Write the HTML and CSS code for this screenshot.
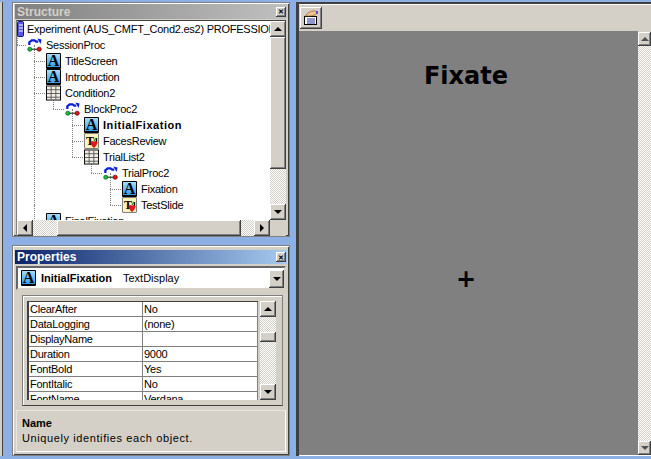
FILE: index.html
```html
<!DOCTYPE html>
<html lang="en">
<head>
    <meta charset="UTF-8">
    <title>E-Studio</title>
    <link rel="stylesheet" href="styles.css">
</head>
<body>

<svg class="defs" width="0" height="0">
    <symbol id="i-proc" viewBox="0 0 16 16">
        <path d="M2.500 8V5L5 3h3l2 1.500h2" fill="none" stroke="#0a1fd8" stroke-width="2.400"/>
        <path d="M11 1l4.500 1-1 5z" fill="#0a1fd8"/>
        <path d="M3 12.500h10" stroke="#000"/>
        <circle cx="3" cy="12.500" r="2.200" fill="#1ebc2c" stroke="#063" stroke-width="0.800"/>
        <circle cx="13" cy="12.500" r="2.200" fill="#e01818" stroke="#600" stroke-width="0.800"/>
    </symbol>
    <symbol id="i-list" viewBox="0 0 16 16">
        <rect x="0.500" y="0.500" width="15" height="15" fill="#f4f0e8" stroke="#000"/>
        <path d="M5.500 1v14M10.500 1v14M1 4.500h14M1 8.500h14M1 12.500h14" stroke="#555" fill="none"/>
    </symbol>
    <symbol id="i-fruit" viewBox="0 0 15 16">
        <path d="M10.500 4v5M13 4v5" stroke="#000" stroke-width="1.300"/>
        <path d="M4.500 8c2-1.500 3-1 3.500 0 .6-1 2-1.500 3.500 0 0 2.500-2 5-3.500 6-1.500-1-3.500-3.500-3.500-6z" fill="#e01818"/>
        <path d="M8 7l2-3" stroke="#1a8a20" stroke-width="1.300"/>
    </symbol>
</svg>

<div class="sliver"></div>

<div class="left">
    <section class="panel structure">
        <div class="title inactive">
            <span>Structure</span>
            <button class="close">&#10005;</button>
        </div>
        <div class="tree-box">
            <div class="tree-row">
                <div class="tree-view">
                    <div class="node root-node">
                        <svg class="book" width="8" height="16" viewBox="0 0 8 16">
                            <rect x="0.500" y="0.500" width="6" height="15" rx="1" fill="#5a5ae0" stroke="#101080"/>
                            <path d="M2 4h4M2 7h4M2 10h4" stroke="#fff"/>
                        </svg>
                        <span class="root-label">Experiment (AUS_CMFT_Cond2.es2) PROFESSIONAL</span>
                    </div>
                    <ul class="tree top">
                        <li>
                            <div class="node"><svg class="ico"><use href="#i-proc"/></svg>SessionProc</div>
                            <ul class="tree">
                                <li><div class="node"><span class="ico ico-text">A</span>TitleScreen</div></li>
                                <li><div class="node"><span class="ico ico-text">A</span>Introduction</div></li>
                                <li>
                                    <div class="node"><svg class="ico"><use href="#i-list"/></svg>Condition2</div>
                                    <ul class="tree">
                                        <li>
                                            <div class="node"><svg class="ico"><use href="#i-proc"/></svg>BlockProc2</div>
                                            <ul class="tree">
                                                <li><div class="node selected"><span class="ico ico-text">A</span>InitialFixation</div></li>
                                                <li><div class="node"><span class="ico ico-slide">T<svg class="fruit"><use href="#i-fruit"/></svg></span>FacesReview</div></li>
                                                <li>
                                                    <div class="node"><svg class="ico"><use href="#i-list"/></svg>TrialList2</div>
                                                    <ul class="tree">
                                                        <li>
                                                            <div class="node"><svg class="ico"><use href="#i-proc"/></svg>TrialProc2</div>
                                                            <ul class="tree">
                                                                <li><div class="node"><span class="ico ico-text">A</span>Fixation</div></li>
                                                                <li><div class="node"><span class="ico ico-slide">T<svg class="fruit"><use href="#i-fruit"/></svg></span>TestSlide</div></li>
                                                            </ul>
                                                        </li>
                                                    </ul>
                                                </li>
                                            </ul>
                                        </li>
                                    </ul>
                                </li>
                                <li><div class="node"><span class="ico ico-text">A</span>FinalFixation</div></li>
                            </ul>
                        </li>
                    </ul>
                </div>
                <div class="vbar">
                    <button class="arrow"><i class="tri up"></i></button>
                    <div class="thumb tree-thumb"></div>
                    <div class="track"></div>
                    <button class="arrow"><i class="tri down"></i></button>
                </div>
            </div>
            <div class="hbar">
                <button class="arrow"><i class="tri left-tri"></i></button>
                <div class="track h-lead"></div>
                <div class="thumb h-thumb"></div>
                <div class="track"></div>
                <button class="arrow"><i class="tri right-tri"></i></button>
                <div class="corner"></div>
            </div>
        </div>
    </section>

    <section class="panel properties">
        <div class="title active">
            <span>Properties</span>
            <button class="close">&#10005;</button>
        </div>
        <div class="combo">
            <span class="ico ico-text">A</span>
            <b class="combo-name">InitialFixation</b>
            <span>TextDisplay</span>
            <button class="arrow combo-btn"><i class="tri down"></i></button>
        </div>
        <div class="grid-box">
            <div class="grid-clip">
                <table class="grid">
                    <tr><td>ClearAfter</td><td>No</td></tr>
                    <tr><td>DataLogging</td><td>(none)</td></tr>
                    <tr><td>DisplayName</td><td></td></tr>
                    <tr><td>Duration</td><td>9000</td></tr>
                    <tr><td>FontBold</td><td>Yes</td></tr>
                    <tr><td>FontItalic</td><td>No</td></tr>
                    <tr><td>FontName</td><td>Verdana</td></tr>
                </table>
            </div>
            <div class="vbar grid-bar">
                <button class="arrow"><i class="tri up"></i></button>
                <div class="track grid-lead"></div>
                <div class="thumb grid-thumb"></div>
                <div class="track"></div>
                <button class="arrow"><i class="tri down"></i></button>
            </div>
        </div>
        <div class="desc">
            <b>Name</b>
            <span class="desc-text">Uniquely identifies each object.</span>
        </div>
    </section>
</div>

<main class="editor">
    <div class="toolbar">
        <button class="tool">
            <svg width="16" height="16" viewBox="0 0 16 16">
                <rect x="1.500" y="6.500" width="12" height="8" fill="#fff" stroke="#000"/>
                <path d="M4 9h8M4 11h8M4 13h8" stroke="#2030a0"/>
                <path d="M2 6l3-3 4-2 4 0 1 2-2 2-4 1z" fill="#f0c48c" stroke="#805020" stroke-width="0.600"/>
                <path d="M14 1v3" stroke="#3030e0" stroke-width="1.400"/>
            </svg>
        </button>
    </div>
    <div class="stage-row">
        <div class="stage">
            <div class="fixate">Fixate</div>
            <div class="plus">+</div>
        </div>
        <div class="vbar stage-bar">
            <button class="arrow"><i class="tri up"></i></button>
            <div class="track"></div>
            <button class="arrow"><i class="tri down"></i></button>
        </div>
    </div>
</main>

</body>
</html>
```

FILE: styles.css
```css
* {
    box-sizing: border-box;
}
html, body {
    height: 100%;
}
body {
    display: flex;
    margin: 0;
    padding: 2px 0 3px;
    overflow: hidden;
    background-color: #8cb0e4;
    font-family: 'Liberation Sans', sans-serif;
    font-size: 11px;
    color: #000;
}
.defs {
    position: absolute;
}
button {
    padding: 0;
    border: none;
    font: inherit;
}

/* win2k bevels */
.arrow, .thumb, .close, .tool {
    background-color: #d4d0c8;
    box-shadow: inset -1px -1px #404040, inset 1px 1px #fff, inset -2px -2px #808080;
}
.track {
    flex: 1;
    background-color: #fff;
    background-image: conic-gradient(#d4d0c8 25%, #fff 0 50%, #d4d0c8 0 75%, #fff 0);
    background-size: 2px 2px;
}
.tri {
    display: block;
    width: 0;
    height: 0;
    border: 4px solid transparent;
}
.tri.up {
    border-top: 0;
    border-bottom-color: #000;
}
.tri.down {
    border-bottom: 0;
    border-top-color: #000;
}
.tri.left-tri {
    border-left: 0;
    border-right-color: #000;
}
.tri.right-tri {
    border-right: 0;
    border-left-color: #000;
}

.sliver {
    width: 3px;
    background-color: #d4d0c8;
    border-right: 1px solid #404040;
}
.left {
    display: flex;
    flex-direction: column;
    gap: 8px;
    width: 278px;
    margin-left: 9px;
}
.panel {
    display: flex;
    flex-direction: column;
    padding: 1px 2px 2px;
    background-color: #d4d0c8;
    border: 1px solid #808080;
    box-shadow: inset 1px 1px #fff, inset -1px -1px #404040;
}
.structure {
    height: 235px;
}
.properties {
    flex: 1;
    padding-top: 4px;
}
.title {
    display: flex;
    align-items: center;
    justify-content: space-between;
    flex-shrink: 0;
    height: 15px;
    padding: 0 1px 0 2px;
    font-weight: bold;
    font-size: 12px;
    color: #fff;
}
.title.inactive {
    background: linear-gradient(to right, #808080, #c0c0c0);
    color: #d4d0c8;
}
.title.active {
    height: 14px;
    background: linear-gradient(to right, #0a246a, #a6caf0);
}
.close {
    display: flex;
    align-items: center;
    justify-content: center;
    width: 10px;
    height: 10px;
    font-size: 7px;
    line-height: 1;
    color: #000;
}

.tree-box {
    display: flex;
    flex-direction: column;
    height: 216px;
    margin: 1px 1px 0;
    border-top: 1px solid #404040;
    border-left: 1px solid #808080;
    background-color: #fff;
}
.tree-row {
    display: flex;
    height: 199px;
}
.tree-view {
    flex: 1;
    min-width: 0;
    overflow: hidden;
    white-space: nowrap;
    letter-spacing: -0.25px;
}
.node {
    display: flex;
    align-items: center;
    position: relative;
    z-index: 1;
    height: 16px;
    gap: 4px;
}
.root-node {
    gap: 2px;
}
.book {
    flex-shrink: 0;
}
.root-label {
    flex-shrink: 0;
}
.selected {
    font-weight: bold;
    letter-spacing: 0.55px;
}
.ico {
    flex-shrink: 0;
    width: 15px;
    height: 16px;
}
.ico-text {
    display: block;
    border: 1px solid #000;
    border-bottom-width: 2px;
    border-radius: 1px;
    background: linear-gradient(to bottom, #a6dcfa, #2f9fee);
    font-family: 'Liberation Serif', serif;
    font-weight: bold;
    font-size: 16px;
    line-height: 14px;
    letter-spacing: 0;
    text-align: center;
}
.ico-slide {
    display: flex;
    overflow: hidden;
    padding-left: 1px;
    border: 1px solid #808080;
    border-radius: 1px;
    background-color: #fdf3b8;
    font-family: 'Liberation Serif', serif;
    font-weight: bold;
    font-size: 12px;
    line-height: 15px;
    letter-spacing: 0;
}
.fruit {
    flex-shrink: 0;
    width: 15px;
    height: 16px;
    margin-left: -8px;
}
.tree {
    margin: 0;
    padding: 0;
    list-style: none;
}
.tree li {
    position: relative;
    padding-left: 19px;
}
.tree li::before {
    content: "";
    position: absolute;
    top: -8px;
    bottom: 0;
    left: 7px;
    border-left: 1px dotted #808080;
}
.tree li::after {
    content: "";
    position: absolute;
    top: 8px;
    left: 7px;
    width: 11px;
    border-top: 1px dotted #808080;
}
.tree li:last-child::before {
    bottom: auto;
    height: 16px;
}
.tree.top > li {
    padding-left: 10px;
}
.tree.top > li::before {
    left: 0;
}
.tree.top > li::after {
    left: 0;
    width: 9px;
}

.vbar {
    display: flex;
    flex-direction: column;
    flex-shrink: 0;
    width: 16px;
}
.vbar .arrow, .hbar .arrow {
    display: flex;
    align-items: center;
    justify-content: center;
    flex-shrink: 0;
    width: 16px;
    height: 16px;
}
.tree-thumb {
    height: 132px;
    flex-shrink: 0;
}
.hbar {
    display: flex;
    height: 16px;
}
.h-lead {
    flex: none;
    width: 24px;
}
.h-thumb {
    width: 184px;
}
.corner {
    flex-shrink: 0;
    width: 16px;
    background-color: #d4d0c8;
}

.combo {
    display: flex;
    align-items: center;
    flex-shrink: 0;
    height: 24px;
    margin: 2px 1px 0;
    padding-left: 3px;
    gap: 5px;
    background-color: #fff;
    border: 2px solid #666;
    border-right-color: #d4d0c8;
    border-bottom-color: #d4d0c8;
}
.combo-name {
    width: 77px;
}
.combo-btn {
    display: flex;
    align-items: center;
    justify-content: center;
    align-self: flex-end;
    width: 15px;
    height: 18px;
    margin-left: auto;
}
.grid-box {
    display: flex;
    flex-shrink: 0;
    height: 111px;
    margin: 5px 4px 0 7px;
    padding: 5px 6px 5px 4px;
    gap: 2px;
    border: 1px solid #808080;
    border-bottom-color: #404040;
    box-shadow: inset 1px 1px #fff;
}
.grid-clip {
    flex: 1;
    overflow: hidden;
    background-color: #fff;
    border-top: 1px solid #404040;
    border-left: 2px solid #404040;
}
.grid {
    width: 100%;
    table-layout: fixed;
    border-collapse: separate;
    border-spacing: 0;
    letter-spacing: -0.25px;
}
.grid td {
    height: 15px;
    padding: 0 1px;
    border-right: 1px solid #808080;
    border-bottom: 1px solid #808080;
    line-height: 14px;
}
.grid td:first-child {
    width: 114px;
}
.grid-bar {
    height: 99px;
}
.grid-lead {
    flex: none;
    height: 15px;
}
.grid-thumb {
    flex-shrink: 0;
    height: 10px;
}
.desc {
    display: flex;
    flex-direction: column;
    height: 42px;
    margin: 4px 1px 0;
    padding: 5px;
    line-height: 15px;
    border: 1px solid #fff;
    border-top-color: #e8e6e0;
    border-left-color: #e8e6e0;
}
.desc-text {
    letter-spacing: 0.6px;
}

.editor {
    display: flex;
    flex-direction: column;
    flex: 1;
    margin-left: 6px;
    background-color: #d4d0c8;
    border-top: 2px solid #404040;
    border-left: 3px solid #404040;
}
.toolbar {
    flex-shrink: 0;
    height: 27px;
    padding: 2px 0 0 1px;
    border-top: 1px solid #fff;
}
.tool {
    display: flex;
    align-items: center;
    justify-content: center;
    width: 22px;
    height: 22px;
}
.stage-row {
    display: flex;
    flex: 1;
    border-bottom: 1px solid #fff;
}
.stage {
    display: flex;
    flex-direction: column;
    align-items: center;
    flex: 1;
    padding-right: 5px;
    background-color: #808080;
    font-family: 'DejaVu Sans', sans-serif;
    font-weight: bold;
}
.fixate {
    margin-top: 28px;
    font-size: 24px;
    line-height: 34px;
}
.plus {
    margin-top: 169px;
    font-size: 24px;
    line-height: 34px;
}
.stage-bar {
    width: 13px;
    padding-top: 1px;
}
.stage-bar .arrow {
    width: 13px;
    height: 14px;
}
.stage-bar .tri.up {
    border-bottom-color: #505050;
}
.stage-bar .tri.down {
    border-top-color: #505050;
}
```
